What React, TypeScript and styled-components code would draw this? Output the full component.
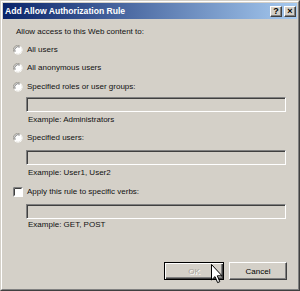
import React from "react";
import styled, { createGlobalStyle } from "styled-components";

const GlobalStyle = createGlobalStyle`
  html, body {
    margin: 0;
    padding: 0;
    background: #d4d0c8;
  }
  * {
    box-sizing: border-box;
  }
`;

const Window = styled.div`
  position: relative;
  width: 300px;
  height: 291px;
  border: 1px solid;
  border-color: #d4d0c8 #404040 #404040 #d4d0c8;
  background: #d4d0c8;
  font-family: "Liberation Sans", Arial, sans-serif;
  font-size: 8px;
  color: #111;
`;

const Frame = styled.div`
  height: 100%;
  border: 1px solid;
  border-color: #ffffff #808080 #808080 #ffffff;
  padding: 1px;
  display: flex;
  flex-direction: column;
`;

const TitleBar = styled.div`
  height: 16px;
  display: flex;
  align-items: center;
  justify-content: space-between;
  padding: 0 1px 0 2px;
  background: linear-gradient(to right, #0a246a, #a6caf0);
`;

const Title = styled.span`
  color: #fff;
  font-weight: bold;
  font-size: 8.6px;
`;

const CaptionButtons = styled.div`
  display: flex;
  gap: 2px;
`;

const CaptionButton = styled.div`
  width: 12px;
  height: 11px;
  display: flex;
  align-items: center;
  justify-content: center;
  background: #d4d0c8;
  border: 1px solid;
  border-color: #ffffff #404040 #404040 #ffffff;
  box-shadow: inset -1px -1px #808080;
  font-weight: bold;
  font-size: 9px;
  line-height: 9px;
  color: #000;
`;

const Body = styled.div`
  flex: 1;
  display: flex;
  flex-direction: column;
  padding: 7px 10px 7px 9px;
`;

const Line = styled.div<{ $top: number; $indent?: number }>`
  height: 12px;
  line-height: 12px;
  margin-top: ${(p) => p.$top}px;
  padding-left: ${(p) => p.$indent ?? 0}px;
  display: flex;
  align-items: center;
  white-space: nowrap;
`;

const Mark = styled.span`
  width: 10px;
  height: 10px;
  margin-right: 4px;
  margin-left: 1px;
  display: inline-flex;
`;

const TextBox = styled.div<{ $top: number }>`
  margin-top: ${(p) => p.$top}px;
  margin-left: 14px;
  height: 15px;
  width: 260px;
  border: 1px solid;
  border-color: #808080 #ffffff #ffffff #808080;
  box-shadow: inset 1px 1px #404040, inset -1px -1px #d4d0c8;
  background: #d4d0c8;
`;

const Footer = styled.div`
  margin-top: auto;
  display: flex;
  justify-content: flex-end;
  gap: 5px;
  padding-bottom: 1px;
`;

const Button = styled.div<{ $default?: boolean; $disabled?: boolean }>`
  width: ${(p) => (p.$default ? 60 : 58)}px;
  height: 18px;
  display: flex;
  align-items: center;
  justify-content: center;
  border: 1px solid;
  border-color: ${(p) =>
    p.$default ? "#000" : "#ffffff #404040 #404040 #ffffff"};
  box-shadow: ${(p) =>
    p.$default
      ? "inset 1px 1px #ffffff, inset -1px -1px #404040, inset -2px -2px #808080"
      : "inset -1px -1px #808080"};
  color: ${(p) => (p.$disabled ? "#a8a49c" : "#000")};
  text-shadow: ${(p) => (p.$disabled ? "1px 1px #ffffff" : "none")};
  font-size: 8px;
`;

const Cursor = styled.svg`
  position: absolute;
  left: 210px;
  top: 263px;
`;

const Radio = () => (
  <Mark>
    <svg width="10" height="10" viewBox="0 0 10 10">
      <circle cx="5" cy="5" r="4.5" fill="#fff" />
      <path d="M1.2 7.2 A4.3 4.3 0 0 1 7.2 1.2" stroke="#9a978f" fill="none" strokeWidth="1" />
      <path d="M2.2 6.6 A3.2 3.2 0 0 1 6.6 2.2" stroke="#5a5a5a" fill="none" strokeWidth="0.8" />
      <path d="M8.6 2.8 A4.3 4.3 0 0 1 2.8 8.6" stroke="#ecebe6" fill="none" strokeWidth="1" />
    </svg>
  </Mark>
);

const Check = () => (
  <Mark>
    <svg width="10" height="10" viewBox="0 0 10 10">
      <rect x="0" y="0" width="10" height="10" fill="#fff" />
      <path d="M0.5 9.5 V0.5 H9.5" stroke="#808080" fill="none" />
      <path d="M1.5 8.5 V1.5 H8.5" stroke="#404040" fill="none" />
    </svg>
  </Mark>
);

const App: React.FC = () => {
  return (
    <>
      <GlobalStyle />
      <Window>
        <Frame>
          <TitleBar>
            <Title>Add Allow Authorization Rule</Title>
            <CaptionButtons>
              <CaptionButton>?</CaptionButton>
              <CaptionButton>×</CaptionButton>
            </CaptionButtons>
          </TitleBar>
          <Body>
            <Line $top={0} $indent={4}>Allow access to this Web content to:</Line>
            <Line $top={6}>
              <Radio />
              All users
            </Line>
            <Line $top={6}>
              <Radio />
              All anonymous users
            </Line>
            <Line $top={7}>
              <Radio />
              Specified roles or user groups:
            </Line>
            <TextBox $top={4} />
            <Line $top={2} $indent={16}>Example: Administrators</Line>
            <Line $top={6}>
              <Radio />
              Specified users:
            </Line>
            <TextBox $top={6} />
            <Line $top={2} $indent={16}>Example: User1, User2</Line>
            <Line $top={7}>
              <Check />
              Apply this rule to specific verbs:
            </Line>
            <TextBox $top={6} />
            <Line $top={0} $indent={16}>Example: GET, POST</Line>
            <Footer>
              <Button $default $disabled>OK</Button>
              <Button>Cancel</Button>
            </Footer>
          </Body>
        </Frame>
        <Cursor width="12" height="20" viewBox="0 0 12 20">
          <path
            d="M0.5 0.5 L0.5 16 L4 12.6 L6.6 18.6 L8.8 17.7 L6.3 11.8 L11 11.8 Z"
            fill="#fff"
            stroke="#000"
            strokeWidth="1"
          />
        </Cursor>
      </Window>
    </>
  );
};

export default App;
